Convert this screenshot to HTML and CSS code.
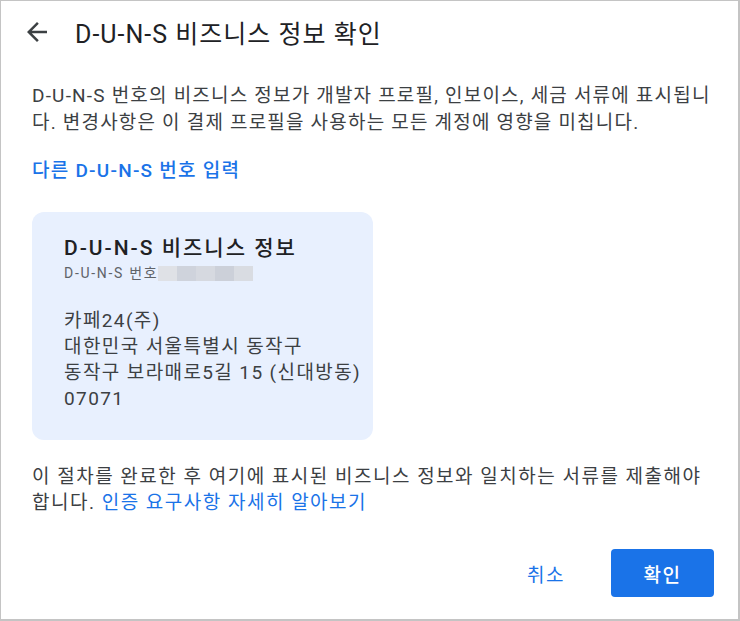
FILE: index.html
```html
<!DOCTYPE html>
<html lang="ko">

<head>
    <meta charset="UTF-8">
    <meta name="viewport" content="width=device-width, initial-scale=1.0">
    <title>D-U-N-S 비즈니스 정보 확인</title>
    <link rel="stylesheet" href="styles.css">
</head>

<body>

    <div class="dialog">
        <div class="dialog-header">
            <button class="back-button" aria-label="뒤로">
                <svg viewBox="0 0 24 24" width="30" height="30">
                    <path d="M20 11H7.83l5.59-5.59L12 4l-8 8 8 8 1.41-1.41L7.83 13H20v-2z" fill="#3c4043" />
                </svg>
            </button>
            <div class="title">D-U-N-S 비즈니스 정보 확인</div>
        </div>

        <div class="dialog-body">
            <p class="desc">D-U-N-S 번호의 비즈니스 정보가 개발자 프로필, 인보이스, 세금 서류에 표시됩니다. 변경사항은 이 결제 프로필을 사용하는 모든 계정에 영향을 미칩니다.</p>

            <a class="link strong" href="#">다른 D-U-N-S 번호 입력</a>

            <div class="info-card">
                <div class="card-title">D-U-N-S 비즈니스 정보</div>
                <div class="card-sub">D-U-N-S 번호<span class="redacted"></span></div>
                <div class="address">
                    <div>카페24(주)</div>
                    <div>대한민국 서울특별시 동작구</div>
                    <div>동작구 보라매로5길 15 (신대방동)</div>
                    <div>07071</div>
                </div>
            </div>

            <p class="note">이 절차를 완료한 후 여기에 표시된 비즈니스 정보와 일치하는 서류를 제출해야 합니다. <a class="link" href="#">인증 요구사항 자세히 알아보기</a></p>
        </div>

        <div class="dialog-footer">
            <button class="btn-text">취소</button>
            <button class="btn-primary">확인</button>
        </div>
    </div>

</body>

</html>
```

FILE: styles.css
```css
body {
    margin: 0;
    padding: 0;
    font-family: Roboto, "Noto Sans CJK KR", sans-serif;
    color: #3c4043;
    background-color: white;
}

.dialog {
    width: 740px;
    height: 621px;
    box-sizing: border-box;
    border: 1px solid #c4c4c4;
    border-right-width: 2px;
    border-bottom-width: 2px;
    background-color: white;
    display: flex;
    flex-direction: column;
}

.dialog-header {
    display: flex;
    align-items: center;
    height: 40px;
    margin-top: 11px;
    padding-left: 21px;
}

.back-button {
    width: 30px;
    height: 30px;
    padding: 0;
    border: none;
    background: none;
    cursor: pointer;
    display: flex;
}

.title {
    margin-left: 23px;
    font-size: 25px;
    letter-spacing: 1px;
    color: #202124;
}

.dialog-body {
    width: 684px;
    padding-left: 31px;
    font-size: 19px;
    letter-spacing: 1.2px;
}

.desc {
    margin: 30px 0 0;
    line-height: 27px;
}

.link {
    color: #1a73e8;
    text-decoration: none;
}

.link.strong {
    display: block;
    margin-top: 21px;
    line-height: 27px;
    font-weight: 500;
    letter-spacing: 1.25px;
}

.info-card {
    margin-top: 28px;
    width: 341px;
    height: 228px;
    box-sizing: border-box;
    padding: 23px 8px 23px 32px;
    background-color: #e8f0fe;
    border-radius: 12px;
}

.card-title {
    font-size: 21px;
    font-weight: 500;
    letter-spacing: 2px;
    color: #202124;
    line-height: 26px;
}

.card-sub {
    display: flex;
    align-items: center;
    font-size: 14px;
    letter-spacing: 1.7px;
    line-height: 24px;
    color: #5f6368;
}

.redacted {
    width: 95px;
    height: 15px;
    margin-left: 0;
    background: linear-gradient(90deg, #dfe1e6 0 20%, #cfd3dc 20% 40%, #d6d9e0 40% 60%, #ccd0d9 60% 80%, #d9dce2 80% 100%);
}

.address {
    margin-top: 23px;
    line-height: 26px;
    letter-spacing: 1.4px;
}

.note {
    margin: 24px 0 0;
    line-height: 26px;
    letter-spacing: 1.5px;
}

.dialog-footer {
    margin-top: auto;
    margin-bottom: 22px;
    padding-right: 24px;
    display: flex;
    justify-content: flex-end;
    align-items: center;
    gap: 30px;
}

.btn-text {
    border: none;
    background: none;
    padding: 0 16px;
    height: 48px;
    font-family: inherit;
    font-size: 19px;
    letter-spacing: 1.5px;
    color: #1a73e8;
    cursor: pointer;
}

.btn-primary {
    width: 103px;
    height: 48px;
    border: none;
    border-radius: 4px;
    background-color: #1a73e8;
    color: white;
    font-family: inherit;
    font-size: 19px;
    letter-spacing: 1.5px;
    font-weight: 500;
    cursor: pointer;
}
```
